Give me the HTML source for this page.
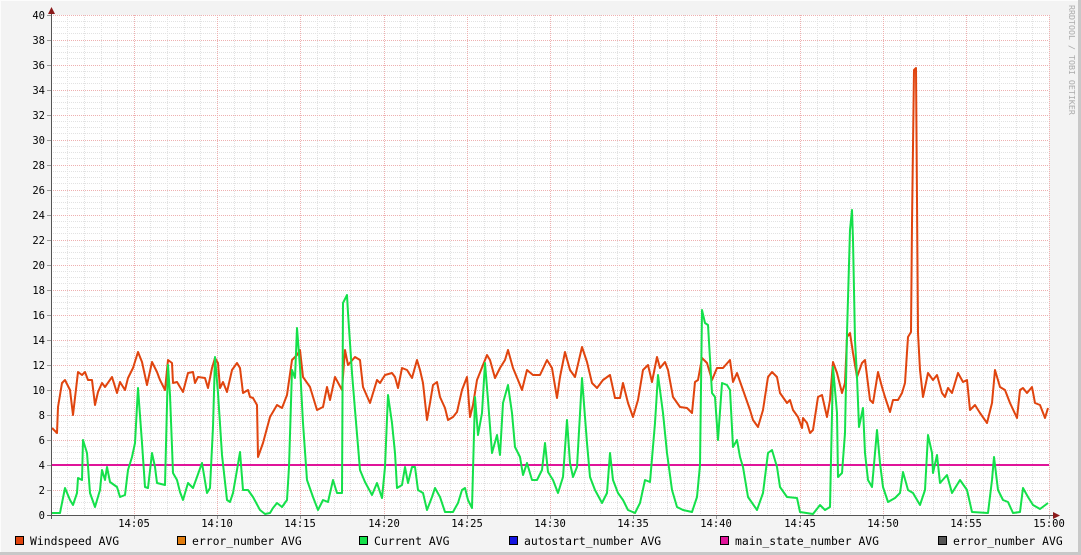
<!DOCTYPE html>
<html><head><meta charset="utf-8"><style>
html,body{margin:0;padding:0;background:#f3f3f3;}
svg{display:block;}
text{font-family:"DejaVu Sans Mono","Liberation Mono",monospace;}
</style></head><body>
<svg width="1081" height="555" viewBox="0 0 1081 555" xmlns="http://www.w3.org/2000/svg">
<rect x="0" y="0" width="1081" height="555" fill="#f3f3f3"/>
<line x1="0" y1="0.5" x2="1081" y2="0.5" stroke="#fcfcfc"/>
<line x1="0.5" y1="0" x2="0.5" y2="555" stroke="#fcfcfc"/>
<line x1="1079.5" y1="0" x2="1079.5" y2="555" stroke="#c8c8c8" stroke-width="3"/>
<line x1="0" y1="553.5" x2="1081" y2="553.5" stroke="#c8c8c8" stroke-width="3"/>
<rect x="51" y="15" width="998" height="500" fill="#ffffff"/>
<g id="grid" stroke-width="1" shape-rendering="crispEdges">
<g stroke="#e2e2e2" stroke-dasharray="1,1">
<path d="M51 21.5H1049M51 27.5H1049M51 33.5H1049M51 46.5H1049M51 52.5H1049M51 58.5H1049M51 71.5H1049M51 77.5H1049M51 83.5H1049M51 96.5H1049M51 102.5H1049M51 108.5H1049M51 121.5H1049M51 127.5H1049M51 133.5H1049M51 146.5H1049M51 152.5H1049M51 158.5H1049M51 171.5H1049M51 177.5H1049M51 183.5H1049M51 196.5H1049M51 202.5H1049M51 208.5H1049M51 221.5H1049M51 227.5H1049M51 233.5H1049M51 246.5H1049M51 252.5H1049M51 258.5H1049M51 271.5H1049M51 277.5H1049M51 283.5H1049M51 296.5H1049M51 302.5H1049M51 308.5H1049M51 321.5H1049M51 327.5H1049M51 333.5H1049M51 346.5H1049M51 352.5H1049M51 358.5H1049M51 371.5H1049M51 377.5H1049M51 383.5H1049M51 396.5H1049M51 402.5H1049M51 408.5H1049M51 421.5H1049M51 427.5H1049M51 433.5H1049M51 446.5H1049M51 452.5H1049M51 458.5H1049M51 471.5H1049M51 477.5H1049M51 483.5H1049M51 496.5H1049M51 502.5H1049M51 508.5H1049"/>
<path d="M67.5 15V515M84.5 15V515M101.5 15V515M117.5 15V515M150.5 15V515M167.5 15V515M184.5 15V515M200.5 15V515M234.5 15V515M250.5 15V515M267.5 15V515M284.5 15V515M317.5 15V515M334.5 15V515M350.5 15V515M367.5 15V515M400.5 15V515M417.5 15V515M434.5 15V515M450.5 15V515M484.5 15V515M500.5 15V515M517.5 15V515M534.5 15V515M567.5 15V515M584.5 15V515M600.5 15V515M617.5 15V515M650.5 15V515M667.5 15V515M684.5 15V515M700.5 15V515M733.5 15V515M750.5 15V515M767.5 15V515M783.5 15V515M817.5 15V515M833.5 15V515M850.5 15V515M866.5 15V515M900.5 15V515M916.5 15V515M933.5 15V515M949.5 15V515M983.5 15V515M999.5 15V515M1016.5 15V515M1032.5 15V515"/>
</g>
<g stroke="#eeb0b0" stroke-dasharray="1,1">
<path d="M51 15.5H1049M51 40.5H1049M51 65.5H1049M51 90.5H1049M51 115.5H1049M51 140.5H1049M51 165.5H1049M51 190.5H1049M51 215.5H1049M51 240.5H1049M51 265.5H1049M51 290.5H1049M51 315.5H1049M51 340.5H1049M51 365.5H1049M51 390.5H1049M51 415.5H1049M51 440.5H1049M51 465.5H1049M51 490.5H1049"/>
<path d="M134.5 15V515M217.5 15V515M300.5 15V515M384.5 15V515M467.5 15V515M550.5 15V515M633.5 15V515M716.5 15V515M800.5 15V515M883.5 15V515M966.5 15V515M1049.5 15V515"/>
</g>
</g>
<g stroke="#999" shape-rendering="crispEdges">
<path d="M47 15.5H51M47 40.5H51M47 65.5H51M47 90.5H51M47 115.5H51M47 140.5H51M47 165.5H51M47 190.5H51M47 215.5H51M47 240.5H51M47 265.5H51M47 290.5H51M47 315.5H51M47 340.5H51M47 365.5H51M47 390.5H51M47 415.5H51M47 440.5H51M47 465.5H51M47 490.5H51M47 515.5H51"/>
<path d="M134.5 515V519M217.5 515V519M300.5 515V519M384.5 515V519M467.5 515V519M550.5 515V519M633.5 515V519M716.5 515V519M800.5 515V519M883.5 515V519M966.5 515V519M1049.5 515V519"/>
</g>
<g fill="none" stroke-linejoin="round" stroke-width="2">
<line x1="51" y1="465" x2="1049" y2="465" stroke="#e0149a"/>
<polyline stroke="#e0440e" points="52,428 57,433 58,407 62,383 65,380 70,390 73,415 78,372 82,375 85,372 88,380 92,380 95,405 98,392 102,383 105,387 112,377 117,393 120,382 125,390 128,378 133,368 138,352 142,362 147,385 152,362 157,372 160,380 165,390 168,360 172,363 173,383 177,382 183,392 188,373 193,372 195,383 198,377 205,378 208,388 212,368 215,358 218,363 220,388 223,382 227,392 232,370 237,363 240,368 243,393 248,390 250,397 253,398 257,405 258,457 263,443 270,417 277,405 282,408 287,395 292,360 297,355 300,350 303,377 310,387 317,410 323,407 327,387 330,400 335,377 342,390 345,350 348,365 355,357 360,360 363,387 370,403 377,380 380,383 385,375 392,373 395,377 398,388 402,368 407,370 412,378 417,360 420,370 423,383 427,420 430,403 433,385 437,382 440,397 445,408 448,420 453,417 457,412 462,390 467,377 470,417 473,405 477,380 483,365 487,355 490,360 495,378 500,368 505,360 508,350 513,368 518,380 522,390 527,370 533,375 540,375 547,360 552,368 557,398 560,377 565,352 570,370 575,377 582,347 587,362 592,383 597,388 603,380 610,375 615,398 620,398 623,383 628,403 633,417 638,400 643,370 648,365 652,382 657,357 660,368 665,362 668,370 673,397 680,407 687,408 692,413 695,382 698,380 702,358 707,363 712,380 717,368 723,368 730,360 733,382 737,373 743,390 750,410 753,420 758,427 763,410 768,377 772,372 777,377 780,393 787,403 790,400 793,410 798,417 802,428 803,418 807,423 810,433 813,430 818,397 822,395 827,417 830,400 833,362 837,373 842,393 845,383 847,337 850,333 853,353 857,377 862,363 865,360 870,400 873,403 878,372 882,387 885,397 890,412 893,400 898,400 902,393 905,383 908,337 911,332 912,223 914,70 916,68 917,200 918,333 920,370 923,397 928,373 933,380 937,375 942,393 945,397 948,388 952,393 955,383 958,373 963,382 967,380 970,410 975,405 980,413 987,423 992,403 995,370 1000,387 1005,390 1010,403 1017,418 1020,390 1023,388 1027,393 1032,387 1035,403 1040,405 1045,418 1048,408"/>
<polyline stroke="#14e04a" points="52,513 60,513 65,488 70,500 73,505 77,493 78,478 82,480 83,440 87,453 90,493 95,507 100,490 102,470 105,480 107,467 110,482 117,487 120,497 125,495 128,470 132,457 135,443 138,388 142,443 145,487 148,488 152,453 155,467 157,483 165,485 168,365 170,395 173,473 177,480 180,492 183,500 188,483 193,488 197,477 202,463 207,493 210,488 213,427 215,357 218,393 222,455 227,500 230,502 233,493 237,470 240,452 243,490 248,490 253,497 260,510 265,514 270,513 273,508 277,503 282,507 287,500 289,467 292,370 295,378 297,328 300,367 303,423 307,480 313,497 318,510 323,500 328,502 333,480 337,493 342,493 343,303 347,295 348,313 352,373 355,410 360,470 365,482 372,495 377,483 382,498 385,467 388,395 392,423 395,453 397,488 402,485 405,467 408,483 412,467 415,467 418,490 423,493 427,510 432,497 435,488 440,497 445,512 453,512 458,503 462,490 465,488 468,500 472,508 475,397 478,435 482,413 485,363 488,400 492,453 497,435 500,455 503,403 508,385 512,413 515,447 520,457 523,475 527,463 532,480 537,480 542,470 545,443 548,472 553,480 558,493 563,477 567,420 570,463 573,477 577,467 582,378 587,443 590,477 595,490 602,503 607,493 610,453 613,480 618,493 623,500 628,510 635,513 640,503 645,480 650,482 655,423 658,375 663,413 667,453 672,490 677,507 683,510 692,512 697,497 700,465 702,310 705,323 708,325 712,393 715,397 718,440 722,383 727,385 730,390 733,447 737,440 740,457 743,467 748,497 757,510 763,493 768,453 772,450 777,467 780,487 787,497 797,498 800,512 813,514 820,505 825,510 830,507 833,367 837,413 838,477 842,473 845,433 847,333 850,230 852,210 853,240 855,340 857,377 859,427 863,408 865,453 868,480 872,487 875,453 877,430 880,463 883,487 888,502 895,498 900,493 903,472 908,490 913,493 920,505 925,490 928,435 932,453 933,473 937,455 940,483 947,475 952,493 960,480 967,490 972,512 988,513 992,480 994,457 998,490 1003,500 1008,502 1013,513 1020,512 1023,488 1028,497 1033,505 1040,509 1048,503"/>
</g>
<g stroke="#555" shape-rendering="crispEdges">
<line x1="51.5" y1="12" x2="51.5" y2="519"/>
<line x1="47" y1="515.5" x2="1054" y2="515.5"/>
</g>
<polygon points="48,14 55,14 51.5,7" fill="#8b1a1a"/>
<polygon points="1053,512 1053,519 1060,515.5" fill="#8b1a1a"/>
<g font-size="10.5" fill="#000" text-anchor="end">
<text x="45" y="19">40</text><text x="45" y="44">38</text><text x="45" y="69">36</text><text x="45" y="94">34</text><text x="45" y="119">32</text><text x="45" y="144">30</text><text x="45" y="169">28</text><text x="45" y="194">26</text><text x="45" y="219">24</text><text x="45" y="244">22</text><text x="45" y="269">20</text><text x="45" y="294">18</text><text x="45" y="319">16</text><text x="45" y="344">14</text><text x="45" y="369">12</text><text x="45" y="394">10</text><text x="45" y="419">8</text><text x="45" y="444">6</text><text x="45" y="469">4</text><text x="45" y="494">2</text><text x="45" y="519">0</text>
</g>
<g font-size="10.5" fill="#000" text-anchor="middle">
<text x="134" y="527">14:05</text><text x="217" y="527">14:10</text><text x="300" y="527">14:15</text><text x="384" y="527">14:20</text><text x="467" y="527">14:25</text><text x="550" y="527">14:30</text><text x="633" y="527">14:35</text><text x="716" y="527">14:40</text><text x="800" y="527">14:45</text><text x="883" y="527">14:50</text><text x="966" y="527">14:55</text><text x="1049" y="527">15:00</text>
</g>
<g stroke="#000" stroke-width="1" shape-rendering="crispEdges">
<rect x="15.5" y="536.5" width="8" height="8" fill="#e0440e"/>
<rect x="177.5" y="536.5" width="8" height="8" fill="#e07c0e"/>
<rect x="359.5" y="536.5" width="8" height="8" fill="#14e04a"/>
<rect x="509.5" y="536.5" width="8" height="8" fill="#1414e0"/>
<rect x="720.5" y="536.5" width="8" height="8" fill="#e0149a"/>
<rect x="938.5" y="536.5" width="8" height="8" fill="#555555"/>
</g>
<g font-size="11.4" fill="#000">
<text x="30" y="545">Windspeed AVG</text>
<text x="192" y="545">error_number AVG</text>
<text x="374" y="545">Current AVG</text>
<text x="524" y="545">autostart_number AVG</text>
<text x="735" y="545">main_state_number AVG</text>
<text x="953" y="545">error_number AVG</text>
</g>
<text x="0" y="0" font-size="8.3" fill="#aaa" transform="translate(1069,5) rotate(90)">RRDTOOL / TOBI OETIKER</text>
</svg>
</body></html>
